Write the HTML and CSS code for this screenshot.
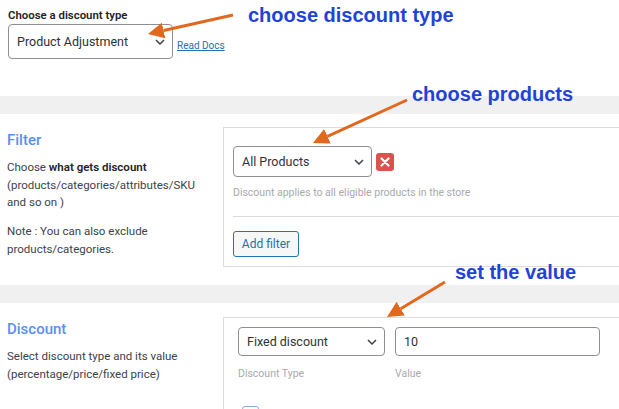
FILE: index.html
```
<!DOCTYPE html>
<html>
<head>
<meta charset="utf-8">
<link rel="stylesheet" href="styles.css">
</head>
<body>
<div class="page">
  <div class="top">
    <div class="top-label">Choose a discount type</div>
    <div class="top-row">
      <div class="select select-type"><span>Product Adjustment</span><svg class="chev" width="10" height="6" viewBox="0 0 10 6"><path d="M1 1 L5 5 L9 1" fill="none" stroke="#3c434a" stroke-width="1.5"/></svg></div>
      <a class="docs" href="#">Read Docs</a>
    </div>
  </div>
  <div class="band"></div>
  <section class="sec sec-filter">
    <div class="side">
      <h2 class="side-title">Filter</h2>
      <p class="side-text">Choose <b>what gets discount</b> (products/categories/attributes/SKU and so on )</p>
      <p class="side-text">Note : You can also exclude products/categories.</p>
    </div>
    <div class="card card-filter">
      <div class="filter-row">
        <div class="select select-products"><span>All Products</span><svg class="chev" width="10" height="6" viewBox="0 0 10 6"><path d="M1 1 L5 5 L9 1" fill="none" stroke="#3c434a" stroke-width="1.5"/></svg></div>
        <div class="remove"><svg width="10" height="10" viewBox="0 0 10 10"><path d="M1.5 1.5 L8.5 8.5 M8.5 1.5 L1.5 8.5" stroke="#fff" stroke-width="2.2" stroke-linecap="round"/></svg></div>
      </div>
      <div class="hint">Discount applies to all eligible products in the store</div>
      <div class="divider"></div>
      <button class="btn">Add filter</button>
    </div>
  </section>
  <div class="band band-2"></div>
  <section class="sec sec-discount">
    <div class="side">
      <h2 class="side-title">Discount</h2>
      <p class="side-text">Select discount type and its value (percentage/price/fixed price)</p>
    </div>
    <div class="card card-discount">
      <div class="fields">
        <div class="field">
          <div class="select select-fixed"><span>Fixed discount</span><svg class="chev" width="10" height="6" viewBox="0 0 10 6"><path d="M1 1 L5 5 L9 1" fill="none" stroke="#3c434a" stroke-width="1.5"/></svg></div>
          <div class="field-label">Discount Type</div>
        </div>
        <div class="field">
          <div class="input-value">10</div>
          <div class="field-label">Value</div>
        </div>
      </div>
      <div class="checkbox"></div>
    </div>
  </section>

  <svg class="arrows" width="619" height="409" viewBox="0 0 619 409">
    <defs>
      <marker id="head" markerUnits="userSpaceOnUse" markerWidth="16" markerHeight="16" refX="0" refY="8" orient="auto">
        <path d="M0,0 L16,8 L0,16 z" fill="#e2681e"/>
      </marker>
    </defs>
    <line x1="233" y1="15" x2="163.6" y2="30.5" stroke="#e2681e" stroke-width="3" marker-end="url(#head)"/>
    <line x1="407" y1="100" x2="327.5" y2="136.3" stroke="#e2681e" stroke-width="3" marker-end="url(#head)"/>
    <line x1="445" y1="282" x2="400.7" y2="308.7" stroke="#e2681e" stroke-width="3" marker-end="url(#head)"/>
  </svg>
  <div class="note note-type">choose discount type</div>
  <div class="note note-products">choose products</div>
  <div class="note note-value">set the value</div>
</div>
</body>
</html>
```

FILE: styles.css
```
* { box-sizing: border-box; }
html, body { margin: 0; padding: 0; background: #fff; }
body { font-family: Roboto, "Noto Sans", Arial, sans-serif; color: #3c434a; }
.page { position: relative; width: 619px; height: 409px; overflow: hidden; }

.top { padding: 8px 8px 0 8px; height: 96px; }
.top-label { font-size: 11.4px; line-height: 14px; font-weight: 600; color: #1d2327; }
.top-row { display: flex; align-items: center; margin-top: 2px; }
.select {
  display: flex; align-items: center; justify-content: space-between;
  border: 1px solid #8c8f94; border-radius: 4px; background: #fff;
  font-size: 12.5px; color: #2c3338;
}
.select-type { width: 165px; height: 35px; padding: 0 7px 0 8px; }
.chev { display: block; }
.docs { margin-left: 4px; margin-top: 7px; font-size: 10px; color: #2271b1; text-decoration: underline; }

.band { height: 18px; background: #f0f0f0; }
.band-2 { margin-top: 18px; }

.sec { display: flex; }
.sec-filter { margin-top: 13px; }
.sec-discount { margin-top: 14px; }
.side { width: 223px; flex: none; padding: 4px 16px 0 7px; }
.sec-discount .side { padding-top: 3px; }
.side-title { margin: 0; font-size: 15px; line-height: 18px; font-weight: 500; color: #5b90ee; }
.side-text { margin: 10px 0 0 0; font-size: 11.5px; line-height: 17.5px; color: #3c434a; }
.side-text + .side-text { margin-top: 11.5px; }
.side-text b { font-weight: 600; color: #1d2327; }

.card { flex: 1; border: 1px solid #dcdcde; border-right: none; }
.card-filter { padding: 18px 0 9px 9px; }
.filter-row { display: flex; align-items: center; }
.select-products { width: 139px; height: 31px; padding: 0 7px 0 8px; }
.remove {
  width: 18px; height: 18px; margin-left: 4px; border-radius: 3px; background: #d9534f;
  display: flex; align-items: center; justify-content: center;
}
.remove svg { display: block; }
.hint { margin-top: 9px; font-size: 10.5px; line-height: 14px; color: #a7aaad; }
.divider { margin-top: 16px; height: 1px; background: #dcdcde; }
.btn {
  margin-top: 14px; height: 26px; width: 66px; padding: 0;
  border: 1px solid #2271b1; border-radius: 3px; background: #f6f7f7;
  font-family: Roboto, "Noto Sans", Arial, sans-serif; font-size: 12px; color: #2271b1;
}

.card-discount { border-bottom: none; padding: 9px 0 0 14px; }
.fields { display: flex; gap: 10px; }
.select-fixed { width: 147px; height: 29px; padding: 0 7px 0 8px; }
.input-value {
  width: 205px; height: 29px; border: 1px solid #8c8f94; border-radius: 4px;
  padding: 0 8px; display: flex; align-items: center; font-size: 12.5px; color: #2c3338;
}
.field-label { margin-top: 11px; font-size: 10.5px; line-height: 14px; color: #a7aaad; }
.checkbox { margin: 25px 0 0 4px; width: 17px; height: 17px; border: 1px solid #8aa9e0; border-radius: 3px; }

.arrows { position: absolute; left: 0; top: 0; pointer-events: none; }
.note {
  position: absolute; font-family: "Liberation Sans", Arial, sans-serif; font-weight: 700;
  font-size: 20px; line-height: 20px; color: #1f43d9; white-space: nowrap;
}
.note-type { left: 248px; top: 5px; }
.note-products { left: 412px; top: 84px; }
.note-value { left: 455px; top: 262px; }
```
